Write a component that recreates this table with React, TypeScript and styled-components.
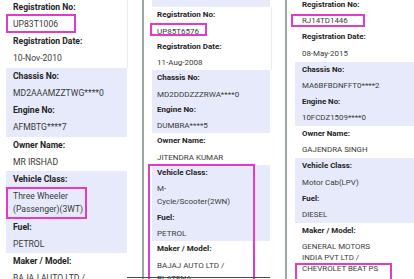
import React from 'react';
import styled, { createGlobalStyle } from 'styled-components';

const Global = createGlobalStyle`
  html, body { margin: 0; padding: 0; background: #fff; }
  body { font-family: Roboto, "Noto Sans", "Liberation Sans", sans-serif; }
  #root { width: 414px; height: 279px; overflow: hidden; }
`;

type Metrics = {
  fs: number; lh: number; pt: number; ml: number; pb: number;
  top: number; tx: number; gx: number; gw: number; cw: number;
};

type Field = { label: string; value: string };
type Group = { tone: 'card' | 'plain' | 'lav'; fields: Field[] };
type Mark = { x: number; y: number; w: number; h: number };

const Stage = styled.div`
  position: relative;
  display: flex;
  width: 414px;
  height: 279px;
  overflow: hidden;
  background: #fff;
`;

const Panel = styled.section<{ $w?: number; $divider?: boolean; $m: Metrics }>`
  position: relative;
  flex: ${p => (p.$w ? `0 0 ${p.$w}px` : '1 1 auto')};
  box-sizing: border-box;
  border-left: ${p => (p.$divider ? '2px solid #9ca7a9' : 'none')};
  overflow: hidden;
  --fs: ${p => p.$m.fs}px;
  --lh: ${p => p.$m.lh}px;
  --pt: ${p => p.$m.pt}px;
  --ml: ${p => p.$m.ml}px;
  --pb: ${p => p.$m.pb}px;
  --tx: ${p => p.$m.tx}px;
  --gx: ${p => p.$m.gx}px;
  --gw: ${p => p.$m.gw}px;
  --cw: ${p => p.$m.cw}px;
`;

const Stack = styled.div<{ $top: number }>`
  display: flex;
  flex-direction: column;
  margin-top: ${p => p.$top}px;
`;

const Stub = styled.div<{ $h: number }>`
  height: ${p => p.$h}px;
  margin-left: var(--gx);
  width: var(--gw);
  background: #e7eafa;
`;

const Block = styled.div<{ $tone: 'card' | 'plain' | 'lav' }>`
  box-sizing: border-box;
  display: flex;
  flex-direction: column;
  margin-left: ${p => (p.$tone === 'lav' ? 'var(--gx)' : '0')};
  width: ${p => (p.$tone === 'lav' ? 'var(--gw)' : 'var(--cw)')};
  padding-left: ${p => (p.$tone === 'lav' ? 'calc(var(--tx) - var(--gx))' : 'var(--tx)')};
  background: ${p => (p.$tone === 'lav' ? '#e7eafa' : '#fff')};
  border-right: ${p => (p.$tone === 'card' ? '1px solid #ececec' : 'none')};
`;

const Label = styled.div`
  font-size: var(--fs);
  font-weight: 700;
  line-height: var(--lh);
  height: var(--lh);
  color: #242424;
  white-space: nowrap;
`;

const Value = styled.div`
  font-size: var(--fs);
  font-weight: 400;
  line-height: var(--ml);
  padding: var(--pt) 0 var(--pb);
  color: #3a3a3a;
  white-space: pre;
`;

const Highlight = styled.div<{ $x: number; $y: number; $w: number; $h: number }>`
  position: absolute;
  left: ${p => p.$x}px;
  top: ${p => p.$y}px;
  width: ${p => p.$w}px;
  height: ${p => p.$h}px;
  box-sizing: border-box;
  border: 2px solid #e23cc6;
  pointer-events: none;
`;

const EdgeLine = styled.div`
  position: absolute;
  left: 127px;
  top: 277px;
  width: 143px;
  height: 1px;
  background: #4a4a4a;
`;

type PanelData = {
  w?: number;
  divider?: boolean;
  m: Metrics;
  stub?: number;
  groups: Group[];
  marks: Mark[];
};

const panels: PanelData[] = [
  {
    w: 142,
    m: { fs: 8.6, lh: 17, pt: 2, ml: 13, pb: 2.5, top: -1.5, tx: 13, gx: 6, gw: 121, cw: 128 },
    groups: [
      { tone: 'card', fields: [
        { label: 'Registration No:', value: 'UP83T1006' },
        { label: 'Registration Date:', value: '10-Nov-2010' },
      ] },
      { tone: 'lav', fields: [
        { label: 'Chassis No:', value: 'MD2AAAMZZTWG****0' },
        { label: 'Engine No:', value: 'AFMBTG****7' },
      ] },
      { tone: 'plain', fields: [{ label: 'Owner Name:', value: 'MR IRSHAD' }] },
      { tone: 'lav', fields: [
        { label: 'Vehicle Class:', value: 'Three Wheeler\n(Passenger)(3WT)' },
        { label: 'Fuel:', value: 'PETROL' },
      ] },
      { tone: 'plain', fields: [{ label: 'Maker / Model:', value: 'BAJAJ AUTO LTD /' }] },
    ],
    marks: [
      { x: 6, y: 14, w: 70, h: 19 },
      { x: 6, y: 187, w: 81, h: 32 },
    ],
  },
  {
    w: 143,
    divider: true,
    stub: 7,
    m: { fs: 8, lh: 16, pt: 1.5, ml: 13, pb: 1.1, top: 0, tx: 13, gx: 8, gw: 118, cw: 128 },
    groups: [
      { tone: 'card', fields: [
        { label: 'Registration No:', value: 'UP85T6576' },
        { label: 'Registration Date:', value: '11-Aug-2008' },
      ] },
      { tone: 'lav', fields: [
        { label: 'Chassis No:', value: 'MD2DDDZZZRWA****0' },
        { label: 'Engine No:', value: 'DUMBRA****5' },
      ] },
      { tone: 'plain', fields: [{ label: 'Owner Name:', value: 'JITENDRA KUMAR' }] },
      { tone: 'lav', fields: [
        { label: 'Vehicle Class:', value: 'M-\nCycle/Scooter(2WN)' },
        { label: 'Fuel:', value: 'PETROL' },
      ] },
      { tone: 'plain', fields: [{ label: 'Maker / Model:', value: 'BAJAJ AUTO LTD /\nPLATENA' }] },
    ],
    marks: [
      { x: 6, y: 23, w: 57, h: 13 },
      { x: 4, y: 164, w: 107, h: 130 },
    ],
  },
  {
    divider: true,
    m: { fs: 7.9, lh: 16, pt: 2.25, ml: 11, pb: 3.05, top: -3, tx: 15, gx: 8, gw: 200, cw: 200 },
    groups: [
      { tone: 'plain', fields: [
        { label: 'Registration No:', value: 'RJ14TD1446' },
        { label: 'Registration Date:', value: '08-May-2015' },
      ] },
      { tone: 'lav', fields: [
        { label: 'Chassis No:', value: 'MA6BFBDNFFT0****2' },
        { label: 'Engine No:', value: '10FCDZ1509****0' },
      ] },
      { tone: 'plain', fields: [{ label: 'Owner Name:', value: 'GAJENDRA SINGH' }] },
      { tone: 'lav', fields: [
        { label: 'Vehicle Class:', value: 'Motor Cab(LPV)' },
        { label: 'Fuel:', value: 'DIESEL' },
      ] },
      { tone: 'plain', fields: [{ label: 'Maker / Model:', value: 'GENERAL MOTORS\nINDIA PVT LTD /\nCHEVROLET BEAT PS' }] },
    ],
    marks: [
      { x: 4, y: 14, w: 74, h: 13 },
      { x: 8, y: 263, w: 97, h: 30 },
    ],
  },
];

export default function App() {
  return (
    <>
      <Global />
      <Stage>
        {panels.map((p, i) => (
          <Panel key={i} $w={p.w} $divider={p.divider} $m={p.m}>
            <Stack $top={p.m.top}>
              {p.stub ? <Stub $h={p.stub} /> : null}
              {p.groups.map((g, j) => (
                <Block key={j} $tone={g.tone}>
                  {g.fields.map((f, k) => (
                    <React.Fragment key={k}>
                      <Label>{f.label}</Label>
                      <Value>{f.value}</Value>
                    </React.Fragment>
                  ))}
                </Block>
              ))}
            </Stack>
            {p.marks.map((mk, k) => (
              <Highlight key={k} $x={mk.x} $y={mk.y} $w={mk.w} $h={mk.h} />
            ))}
          </Panel>
        ))}
        <EdgeLine />
      </Stage>
    </>
  );
}
